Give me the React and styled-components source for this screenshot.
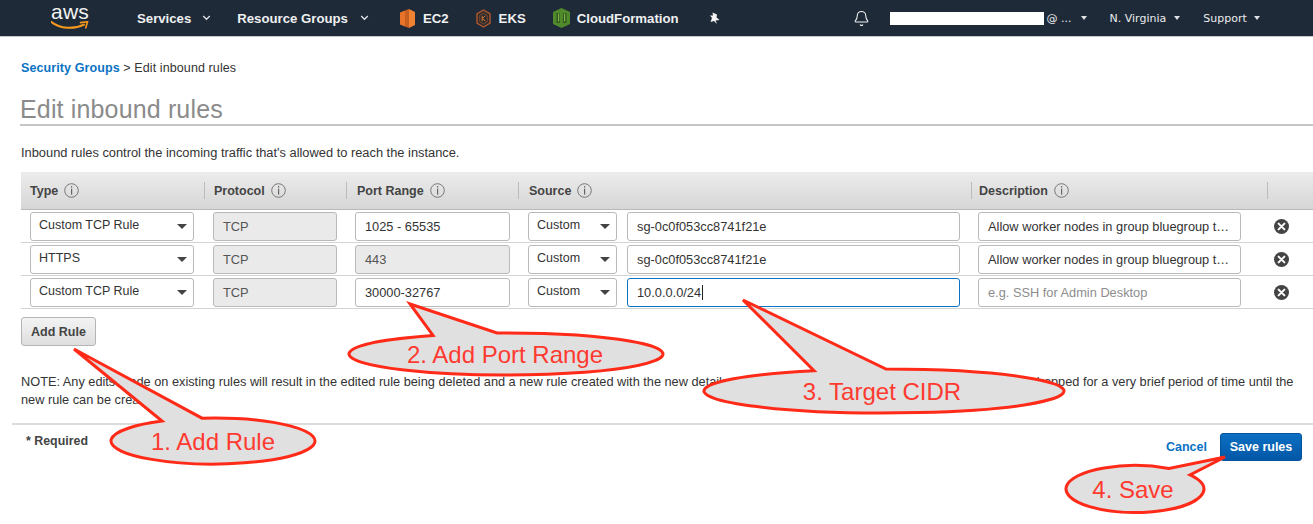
import React from "react";
import styled, { createGlobalStyle } from "styled-components";
import { Bell } from "lucide-react";

const Global = createGlobalStyle`
  html, body { margin: 0; padding: 0; background: #fff; }
  body { font-family: "Liberation Sans", Arial, sans-serif; color: #333; overflow: hidden; }
  * { box-sizing: border-box; }
`;

const Page = styled.div`
  position: relative;
  width: 1313px;
  height: 524px;
  overflow: hidden;
`;

const Nav = styled.header`
  height: 37px;
  background: #1f2a38;
  border-bottom: 1px solid #c9c9c9;
  display: flex;
  align-items: center;
  padding-left: 51px;
  color: #fff;
`;

const Logo = styled.div`
  width: 38px;
  height: 36px;
  display: flex;
  flex-direction: column;
  align-items: center;
  padding-top: 1px;
  margin-right: 48px;
`;

const LogoWord = styled.span`
  font-size: 21px;
  line-height: 21px;
  letter-spacing: 0.2px;
  height: 20px;
  color: #f4f4f4;
`;

const NavItem = styled.div`
  display: flex;
  align-items: center;
  gap: ${(p) => p.$gap || 8}px;
  margin-right: ${(p) => p.$mr || 0}px;
  font-size: 13.2px;
  font-weight: 700;
  color: #eef0f1;
  white-space: nowrap;
`;

const RightNav = styled.div`
  display: flex;
  align-items: center;
  margin-left: 132px;
  font-family: "DejaVu Sans", Verdana, sans-serif;
  font-size: 11px;
  color: #eaecee;
`;

const Masked = styled.div`
  width: 154px;
  height: 13px;
  background: #fff;
  margin: 0 3px 0 20px;
`;

const RightItem = styled.span`
  display: flex;
  align-items: center;
  white-space: nowrap;
  gap: ${(p) => p.$gap || 8}px;
  margin-right: ${(p) => p.$mr || 0}px;
`;

const DownTri = styled.i`
  width: 0;
  height: 0;
  border-left: 3.5px solid transparent;
  border-right: 3.5px solid transparent;
  border-top: 4px solid #dfe2e5;
`;

const Content = styled.main`
  padding-left: 21px;
`;

const Crumbs = styled.div`
  font-size: 12.5px;
  line-height: 14px;
  padding-top: 24px;
  letter-spacing: 0.1px;
`;

const CrumbLink = styled.b`
  color: #0a73c4;
`;

const Title = styled.h1`
  margin: 19px 0 0 -1px;
  height: 32px;
  font-size: 25px;
  line-height: 30px;
  font-weight: 400;
  color: #8b8b8b;
  border-bottom: 2px solid #c6c6c6;
  letter-spacing: 0.15px;
`;

const Lead = styled.p`
  margin: 20px 0 0;
  font-size: 12.85px;
  line-height: 14px;
  height: 26px;
`;

const columns = "183px 142px 172px 453px 296px 46px";

const HeadRow = styled.div`
  display: grid;
  grid-template-columns: ${columns};
  height: 38px;
  align-items: center;
  background: linear-gradient(#ececec, #d6d6d6);
  border-bottom: 1px solid #b9b9b9;
`;

const HeadCell = styled.div`
  height: 17px;
  display: flex;
  align-items: center;
  gap: 6px;
  padding-left: ${(p) => p.$pl || 9}px;
  font-size: 12.5px;
  font-weight: 700;
  color: #444;
  border-left: ${(p) => (p.$first ? "0" : "1px solid #bcbcbc")};
`;

const Row = styled.div`
  display: grid;
  grid-template-columns: ${columns};
  height: 33px;
  align-items: center;
  border-bottom: 1px solid #d4d4d4;
`;

const Cell = styled.div`
  display: flex;
  align-items: center;
  gap: 10px;
  padding-left: ${(p) => p.$pl || 9}px;
`;

const Field = styled.div`
  width: ${(p) => (p.$w ? `${p.$w}px` : "auto")};
  height: 29px;
  line-height: 27px;
  padding: 0 9px;
  font-size: 12.8px;
  white-space: nowrap;
  overflow: hidden;
  text-overflow: ellipsis;
  border-radius: 3px;
  color: ${(p) => (p.$muted ? "#8d8d8d" : p.$off ? "#555" : "#333")};
  background: ${(p) => (p.$off ? "#eaeaea" : "#fff")};
  border: 1px solid ${(p) => (p.$focus ? "#0a73c4" : "#b9b9b9")};
`;

const SelectBox = styled.div`
  width: ${(p) => p.$w}px;
  height: 29px;
  display: flex;
  align-items: center;
  justify-content: space-between;
  padding: 0 6px 2px 8px;
  font-size: 12.5px;
  color: #333;
  border: 1px solid #b9b9b9;
  border-radius: 3px;
  background: #fff;
`;

const SelectTri = styled.i`
  width: 0;
  height: 0;
  margin-top: 3px;
  border-left: 5px solid transparent;
  border-right: 5px solid transparent;
  border-top: 5px solid #444;
`;

const TextCaret = styled.span`
  display: inline-block;
  width: 1px;
  height: 15px;
  margin-left: 1px;
  background: #222;
  vertical-align: -3px;
`;

const AddButton = styled.button`
  display: block;
  width: 75px;
  height: 29px;
  margin-top: 8px;
  padding: 0;
  font: 700 12.5px "Liberation Sans", Arial, sans-serif;
  color: #444;
  border: 1px solid #b5b5b5;
  border-radius: 3px;
  background: linear-gradient(#f3f3f3, #dedede);
`;

const Note = styled.p`
  margin: 27px 0 0;
  width: 1280px;
  font-size: 12.75px;
  line-height: 18px;
`;

const Footer = styled.footer`
  margin-top: 14px;
  margin-left: 12px;
  height: 60px;
  border-top: 2px solid #dcdcdc;
  display: flex;
  justify-content: space-between;
  padding: 8px 11px 0 14px;
`;

const Required = styled.b`
  font-size: 12.4px;
  line-height: 16px;
  color: #444;
`;

const FooterActions = styled.div`
  display: flex;
  align-items: flex-start;
  gap: 13px;
`;

const CancelLink = styled.b`
  font-size: 12.5px;
  line-height: 28px;
  color: #0a73c4;
`;

const SaveButton = styled.button`
  width: 82px;
  height: 28px;
  padding: 0;
  font: 700 12.5px "Liberation Sans", Arial, sans-serif;
  color: #fff;
  border: 1px solid #04539c;
  border-radius: 3px;
  background: linear-gradient(#0b6fc2, #0457a6);
`;

const Overlay = styled.svg`
  position: absolute;
  left: 0;
  top: 0;
  pointer-events: none;
`;

const CalloutLabel = styled.text`
  font-family: "Liberation Sans", Arial, sans-serif;
  font-size: 24px;
  fill: #ff3a30;
  text-anchor: middle;
`;

const InfoIcon = () => (
  <svg width="15" height="15" viewBox="0 0 15 15">
    <circle cx="7.5" cy="7.5" r="6.8" fill="none" stroke="#777" strokeWidth="1" />
    <rect x="7" y="3" width="1.2" height="1.5" fill="#666" />
    <rect x="7" y="5.6" width="1.2" height="6" fill="#666" />
  </svg>
);

const RemoveIcon = () => (
  <svg width="15" height="15" viewBox="0 0 15 15">
    <circle cx="7.5" cy="7.5" r="7.5" fill="#444" />
    <path d="M4.6 4.6l5.8 5.8M10.4 4.6l-5.8 5.8" stroke="#fff" strokeWidth="2" strokeLinecap="round" />
  </svg>
);

const Chevron = () => (
  <svg width="9" height="6" viewBox="0 0 9 6">
    <path d="M1.2 1l3.3 3.3L7.8 1" fill="none" stroke="#dfe2e5" strokeWidth="1.3" />
  </svg>
);

const Smile = () => (
  <svg width="38" height="9" viewBox="0 0 38 9">
    <path d="M0.5 1C9 8 23 8.5 33 3.6" fill="none" stroke="#f79a1c" strokeWidth="2" strokeLinecap="round" />
    <path d="M29.5 1.6L36.5 0.8 34.8 6.8" fill="none" stroke="#f79a1c" strokeWidth="1.6" strokeLinecap="round" />
  </svg>
);

const Ec2Icon = () => (
  <svg width="15" height="19" viewBox="0 0 15 19">
    <path d="M0 3.5L5 1.5v16L0 15.5z" fill="#e8742a" />
    <path d="M5 1.5L9 0v19l-4-1.5z" fill="#c95f1f" />
    <path d="M9 0l6 3v13l-6 3z" fill="#f08234" />
  </svg>
);

const EksIcon = () => (
  <svg width="15" height="19" viewBox="0 0 15 19">
    <path d="M7.5 1L14 4.8v9.4L7.5 18 1 14.2V4.8z" fill="#2a2c30" stroke="#b4572a" strokeWidth="1.4" />
    <path d="M7.5 4l3.8 2.4v6.2L7.5 15 3.7 12.6V6.4z" fill="none" stroke="#8c4a2a" strokeWidth="0.9" />
    <path d="M6.2 6.8v5.4M9.3 6.8L6.4 9.5l3 2.7" fill="none" stroke="#d9772f" strokeWidth="1" />
  </svg>
);

const CfIcon = () => (
  <svg width="17" height="20" viewBox="0 0 17 20">
    <path d="M8.5 0l8.5 4v12l-8.5 4L0 16V4z" fill="#4f8a2b" />
    <path d="M3.5 5h3.5v10H3.5zM10 5h3.5v10H10z" fill="#33561f" />
    <path d="M5 5.5h1.2v8H5zM11 5.5h1.2v8H11z" fill="#7cb648" />
  </svg>
);

const PinIcon = () => (
  <svg width="12" height="13" viewBox="0 0 12 13">
    <path d="M3.5 0.5L8 2.5 7.5 5.5 10.5 8 6.5 8.5 8 12 5 9 1.5 10 3 6 1 3.5 4 3.5z" fill="#f4f4f4" />
  </svg>
);

const callouts = [
  { cx: 213, cy: 441, rx: 102, ry: 23, tip: [74, 349], base: [162, 202], label: "1. Add Rule", tx: 213, ty: 450 },
  { cx: 506, cy: 354, rx: 157, ry: 21, tip: [410, 304], base: [433, 497], label: "2. Add Port Range", tx: 505, ty: 363 },
  { cx: 884, cy: 391, rx: 180, ry: 22, tip: [743, 300], base: [814, 886], label: "3. Target CIDR", tx: 882, ty: 400 },
  { cx: 1135, cy: 489, rx: 69, ry: 23.5, tip: [1225, 457], base: [1169, 1190], label: "4. Save", tx: 1133, ty: 498 },
];

const topY = (c, x) => c.cy - c.ry * Math.sqrt(1 - ((x - c.cx) / c.rx) ** 2);

const calloutPath = (c) => {
  const [a, b] = c.base;
  return `M${b} ${topY(c, b)}A${c.rx} ${c.ry} 0 1 1 ${a} ${topY(c, a)}L${c.tip[0]} ${c.tip[1]}Z`;
};

const rules = [
  { type: "Custom TCP Rule", port: "1025 - 65535", src: "sg-0c0f053cc8741f21e", desc: "Allow worker nodes in group bluegroup to communicate" },
  { type: "HTTPS", port: "443", portOff: true, src: "sg-0c0f053cc8741f21e", desc: "Allow worker nodes in group bluegroup to communicate" },
  { type: "Custom TCP Rule", port: "30000-32767", src: "10.0.0.0/24", focus: true },
];

const heads = [
  { label: "Type", first: true },
  { label: "Protocol" },
  { label: "Port Range", pl: 10 },
  { label: "Source", pl: 10 },
  { label: "Description", pl: 7 },
  { label: "" },
];

export default function App() {
  return (
    <Page>
      <Global />
      <Nav>
        <Logo>
          <LogoWord>aws</LogoWord>
          <Smile />
        </Logo>
        <NavItem $mr={26} $gap={11}>Services <Chevron /></NavItem>
        <NavItem $mr={31} $gap={12}>Resource Groups <Chevron /></NavItem>
        <NavItem $mr={27}><Ec2Icon />EC2</NavItem>
        <NavItem $mr={27}><EksIcon />EKS</NavItem>
        <NavItem $mr={30} $gap={7}><CfIcon />CloudFormation</NavItem>
        <PinIcon />
        <RightNav>
          <Bell size={17} strokeWidth={1.5} color="#f2f2f2" />
          <Masked />
          <RightItem $mr={23} $gap={9}>@ ... <DownTri /></RightItem>
          <RightItem $mr={23}>N. Virginia <DownTri /></RightItem>
          <RightItem $gap={7}>Support <DownTri /></RightItem>
        </RightNav>
      </Nav>
      <Content>
        <Crumbs>
          <CrumbLink>Security Groups</CrumbLink> &gt; Edit inbound rules
        </Crumbs>
        <Title>Edit inbound rules</Title>
        <Lead>Inbound rules control the incoming traffic that's allowed to reach the instance.</Lead>
        <HeadRow>
          {heads.map((h, i) => (
            <HeadCell key={i} $first={h.first} $pl={h.pl}>
              {h.label}
              {h.label && <InfoIcon />}
            </HeadCell>
          ))}
        </HeadRow>
        {rules.map((r, i) => (
          <Row key={i}>
            <Cell>
              <SelectBox $w={164}>{r.type}<SelectTri /></SelectBox>
            </Cell>
            <Cell>
              <Field $w={124} $off>TCP</Field>
            </Cell>
            <Cell>
              <Field $w={155} $off={r.portOff}>{r.port}</Field>
            </Cell>
            <Cell $pl={10}>
              <SelectBox $w={89}>Custom<SelectTri /></SelectBox>
              <Field $w={333} $focus={r.focus}>
                {r.src}
                {r.focus && <TextCaret />}
              </Field>
            </Cell>
            <Cell $pl={7}>
              {r.desc
                ? <Field $w={263}>{r.desc}</Field>
                : <Field $w={263} $muted>e.g. SSH for Admin Desktop</Field>}
            </Cell>
            <Cell $pl={7}>
              <RemoveIcon />
            </Cell>
          </Row>
        ))}
        <AddButton>Add Rule</AddButton>
        <Note>
          NOTE: Any edits made on existing rules will result in the edited rule being deleted and a new rule created with the new details. This will cause traffic that depends on that rule to be dropped for a very brief period of time until the new rule can be created.
        </Note>
      </Content>
      <Footer>
        <Required>* Required</Required>
        <FooterActions>
          <CancelLink>Cancel</CancelLink>
          <SaveButton>Save rules</SaveButton>
        </FooterActions>
      </Footer>
      <Overlay width="1313" height="524" viewBox="0 0 1313 524">
        {callouts.map((c) => (
          <g key={c.label}>
            <path d={calloutPath(c)} fill="#e0e0e0" stroke="#ff2a17" strokeWidth="3" strokeLinejoin="miter" />
            <CalloutLabel x={c.tx} y={c.ty}>{c.label}</CalloutLabel>
          </g>
        ))}
      </Overlay>
    </Page>
  );
}
